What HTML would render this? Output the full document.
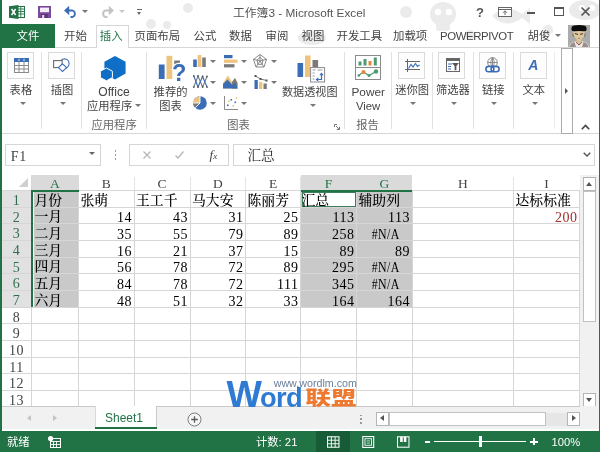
<!DOCTYPE html>
<html lang="zh-CN"><head><meta charset="utf-8"><title>Excel</title>
<style>
*{margin:0;padding:0;box-sizing:border-box}
html,body{width:600px;height:452px;overflow:hidden;background:#fff}
body{position:relative;font-family:"Liberation Sans","Noto Sans CJK SC",sans-serif;font-size:12px;color:#444}
.a{position:absolute;white-space:nowrap}
.t{position:absolute;white-space:nowrap;line-height:1}
svg{position:absolute;overflow:visible}
.tab{position:absolute;top:29px;font-size:11.4px;color:#444;line-height:14px;white-space:nowrap}
.gl{position:absolute;top:118px;font-size:11.3px;color:#666;line-height:14px;white-space:nowrap}
.bl{position:absolute;font-size:11.3px;color:#444;line-height:14px;white-space:nowrap}
.sep{position:absolute;top:52px;width:1px;height:77px;background:#e2e2e2}
.ib{position:absolute;top:52px;width:27px;height:27px;border:1px solid #dadada;background:#fdfdfd}
.dd{position:absolute;width:0;height:0;border-left:3px solid transparent;border-right:3px solid transparent;border-top:3px solid #777}
.ch{position:absolute;top:177px;height:14px;font-family:"Liberation Serif","Noto Serif CJK SC",serif;font-size:13.5px;line-height:14px;color:#444;text-align:center}
.rh{position:absolute;left:2px;width:29px;font-family:"Liberation Serif","Noto Serif CJK SC",serif;font-size:14px;line-height:17px;color:#444;text-align:center;letter-spacing:0.4px}
.vl{position:absolute;top:190px;width:1px;height:216px;background:#d6d6d6}
.hl{position:absolute;left:2px;width:578px;height:1px;background:#d6d6d6}
.c{position:absolute;height:17px;line-height:17px;font-family:"Liberation Serif","Noto Serif CJK SC",serif;font-size:13.85px;color:#000;white-space:nowrap;font-weight:500}
.n{text-align:right;font-size:14px;letter-spacing:0.5px;margin-top:2.7px}
.sel{position:absolute;background:#c9c9c9}
.sb{position:absolute;border:1px solid #b5b5b5;background:#fff}
</style></head>
<body>
<div style="position:absolute;left:0;top:0;width:600px;height:452px;will-change:transform">
<svg style="left:0;top:0" width="600" height="48" viewBox="0 0 600 48">
<g fill="#ebebeb">
<ellipse cx="443" cy="14" rx="13" ry="12"/><rect x="436" y="22" width="14" height="9" rx="3"/>
<path d="M492 16 q14 -14 30 -2 l8 -6 v16 l-8 -6 q-16 12 -30 -2z"/>
<ellipse cx="585" cy="10" rx="16" ry="10"/>
<circle cx="151" cy="24" r="5"/><circle cx="167" cy="25" r="4"/><circle cx="188" cy="8" r="5"/>
<ellipse cx="312" cy="38" rx="14" ry="7"/><circle cx="406" cy="12" r="6"/><circle cx="470" cy="35" r="5"/>
<circle cx="548" cy="30" r="5"/>
</g>
<g fill="#fff"><circle cx="438" cy="12" r="3.2"/><circle cx="449" cy="12" r="3.2"/><circle cx="505" cy="12" r="2"/><circle cx="582" cy="8" r="3"/><circle cx="592" cy="8" r="3"/></g>
</svg>
<div class="a" style="left:0;top:0;width:2px;height:452px;background:#217346"></div>
<div class="a" style="left:599px;top:0;width:1px;height:452px;background:#217346"></div>
<svg style="left:9px;top:5px" width="16" height="14" viewBox="0 0 16 14">
<rect x="7" y="1.5" width="8.5" height="11" fill="#fff" stroke="#217346" stroke-width="1"/>
<path d="M9 4h6M9 6.5h6M9 9h6M11.8 2v10" stroke="#217346" stroke-width="0.9" fill="none"/>
<path d="M0 1.2 L9.5 0 V14 L0 12.8z" fill="#217346"/>
<path d="M2.6 4 L6.6 10 M6.6 4 L2.6 10" stroke="#fff" stroke-width="1.5" fill="none"/>
</svg>
<svg style="left:38px;top:6px" width="13" height="12" viewBox="0 0 13 12">
<path d="M0 0h13v12H0z" fill="#7c4a9c"/><rect x="2" y="1.6" width="9" height="4.6" fill="#f3eef7"/><rect x="3.2" y="8" width="6.6" height="4" fill="#5d3579"/><rect x="4.2" y="9" width="2" height="3" fill="#e9e0f0"/>
</svg>
<svg style="left:64px;top:5px" width="14" height="12" viewBox="0 0 14 12">
<path d="M2.5 5.5 H8.5 A3.4 3.4 0 0 1 8.5 12 H6.5" fill="none" stroke="#3a6db5" stroke-width="1.8"/>
<path d="M0 5.5 L5.2 0.8 V10.2z" fill="#3a6db5"/></svg>
<div class="dd" style="left:82px;top:10px;border-top-color:#777"></div>
<svg style="left:100px;top:5px" width="14" height="12" viewBox="0 0 14 12">
<path d="M11.5 5.5 H5.5 A3.4 3.4 0 0 0 5.5 12 H7.5" fill="none" stroke="#c4c4c4" stroke-width="2"/>
<path d="M14 5.5 L8.8 0.8 V10.2z" fill="#c4c4c4"/></svg>
<div class="dd" style="left:119px;top:10px;border-top-color:#c8c8c8"></div>
<div class="a" style="left:137px;top:9px;width:5px;height:1px;background:#666"></div>
<div class="dd" style="left:137px;top:11.5px;border-left-width:2.5px;border-right-width:2.5px;border-top-color:#666"></div>
<div class="t" style="left:233px;top:5px;font-size:11.8px;color:#555;line-height:15px;top:5.5px">工作簿3 - Microsoft Excel</div>
<div class="t" style="left:476px;top:5px;font-size:13px;font-weight:bold;color:#555;line-height:15px">?</div>
<svg style="left:498px;top:7px" width="14" height="10" viewBox="0 0 14 10">
<rect x="0.5" y="0.5" width="13" height="9" fill="#fff" stroke="#666"/><path d="M0.5 2.5h13" stroke="#666"/><path d="M7 8V4M5 5.8L7 3.8L9 5.8" stroke="#666" fill="none"/></svg>
<div class="a" style="left:527px;top:12px;width:8px;height:2px;background:#555"></div>
<div class="a" style="left:554px;top:7px;width:10px;height:9px;border:1px solid #555;border-top-width:2.5px"></div>
<svg style="left:581px;top:7px" width="9" height="9" viewBox="0 0 9 9"><path d="M0.5 0.5L8.5 8.5M8.5 0.5L0.5 8.5" stroke="#555" stroke-width="1.7"/></svg>
<div class="a" style="left:2px;top:47px;width:597px;height:1px;background:#d6d6d6"></div>
<div class="a" style="left:2px;top:24px;width:53px;height:24px;background:#217346"></div>
<div class="tab" style="left:16.5px;color:#fff">文件</div>
<div class="a" style="left:95.5px;top:25px;width:33.5px;height:23px;background:#fff;border:1px solid #d6d6d6;border-bottom:none"></div>
<div class="tab" style="left:64px;color:#444">开始</div>
<div class="tab" style="left:99.8px;color:#217346">插入</div>
<div class="tab" style="left:134.5px;color:#444">页面布局</div>
<div class="tab" style="left:193.5px;color:#444">公式</div>
<div class="tab" style="left:229px;color:#444">数据</div>
<div class="tab" style="left:265.5px;color:#444">审阅</div>
<div class="tab" style="left:301.5px;color:#444">视图</div>
<div class="tab" style="left:336.5px;color:#444">开发工具</div>
<div class="tab" style="left:393px;color:#444">加载项</div>
<div class="tab" style="left:440px;color:#444;letter-spacing:-0.4px">POWERPIVOT</div>
<div class="tab" style="left:527.5px;color:#444">胡俊</div>
<div class="dd" style="left:555px;top:34px"></div>
<svg style="left:568px;top:25px" width="22" height="22" viewBox="0 0 22 22">
<rect width="22" height="22" fill="#ababab"/>
<path d="M1 22 Q2 17.5 7 16.5 L15 16.5 Q20 17.5 21 22z" fill="#f3e9ea"/>
<path d="M1.5 22 Q2.5 18 6.5 17 L8 22z M20.5 22 Q19.5 18 15.5 17 L14 22z" fill="#9a8f8a"/>
<path d="M8.5 13.5h5v4.2l-2.5 2l-2.5-2z" fill="#d9bf94"/>
<path d="M8 17.2 L11 20 L14 17.2" stroke="#7a4a3a" stroke-width="0.9" fill="none"/>
<path d="M5.2 6 H16.8 L16 11.5 L11 16.3 L6 11.5z" fill="#dec79c"/>
<path d="M4.6 8.5 l1 3.5 M17.4 8.5 l-1 3.5" stroke="#8a8070" stroke-width="1.2"/>
<path d="M3.4 4.8 Q3.2 1.2 6 0.6 Q11 -0.6 16 0.6 Q18.8 1.2 18.6 4.8 Q18 6.6 15.5 6.3 Q11 5.6 6.5 6.3 Q4 6.6 3.4 4.8z" fill="#0c0c0c"/>
<path d="M7 8.6 L10 9.4 M15 8.6 L12 9.4" stroke="#2a2018" stroke-width="0.9"/>
<path d="M10 13.4h2" stroke="#8a5a40" stroke-width="0.7"/>
</svg>
<div class="a" style="left:2px;top:133px;width:597px;height:1px;background:#d6d6d6"></div>
<div class="sep" style="left:40.5px"></div>
<div class="sep" style="left:81px"></div>
<div class="sep" style="left:146px"></div>
<div class="sep" style="left:344px"></div>
<div class="sep" style="left:391px"></div>
<div class="sep" style="left:432px"></div>
<div class="sep" style="left:472.5px"></div>
<div class="sep" style="left:512.5px"></div>
<div class="sep" style="left:553.5px;background:#ececec"></div>
<div class="ib" style="left:7px"></div>
<svg style="left:14px;top:57.5px" width="15" height="15" viewBox="0 0 15 15">
<rect x="0.5" y="0.5" width="14" height="14" fill="#fff" stroke="#8a8a8a"/>
<rect x="0" y="0" width="15" height="4" fill="#3a6db5"/>
<path d="M0.5 7.5h14M0.5 11h14M5 4v10.5M10 4v10.5" stroke="#8a8a8a" stroke-width="1" fill="none"/>
<path d="M5 0.8v2.4M10 0.8v2.4" stroke="#fff" stroke-width="0.8"/></svg>
<div class="bl" style="left:9.6px;top:83px">表格</div>
<div class="dd" style="left:19.5px;top:102px"></div>
<div class="ib" style="left:47.5px"></div>
<svg style="left:53px;top:58px" width="17" height="14" viewBox="0 0 17 14">
<circle cx="11.5" cy="5.5" r="4.6" fill="#fff" stroke="#3a6db5" stroke-width="1.1"/>
<rect x="0.6" y="2.6" width="8.6" height="7" fill="#fff" stroke="#6a6a6a" stroke-width="1.1"/>
<path d="M9.5 5.8 L13.6 9.6 L9.5 13.4 L5.4 9.6z" fill="#fff" stroke="#3a6db5" stroke-width="1.1"/></svg>
<div class="bl" style="left:50.8px;top:83px">插图</div>
<div class="dd" style="left:59.6px;top:102px"></div>
<svg style="left:100px;top:55.5px" width="26" height="25" viewBox="0 0 26 25">
<path d="M15 0 L25.6 5.8 V17.6 L15 23.4 L4.4 17.6 V5.8z" fill="#0f6fc6"/>
<path d="M6.4 12 L12.4 15.2 V21.6 L6.4 24.8 L0.4 21.6 V15.2z" fill="#0f6fc6" stroke="#fff" stroke-width="1"/></svg>
<div class="bl" style="left:98.3px;top:85px;font-size:12.1px">Office</div>
<div class="bl" style="left:87px;top:98.5px">应用程序</div>
<div class="dd" style="left:134.5px;top:104px"></div>
<div class="gl" style="left:91.5px">应用程序</div>
<svg style="left:158px;top:55px" width="29" height="27" viewBox="0 0 29 27">
<rect x="0.8" y="9.5" width="5.8" height="14.5" fill="#3a6db5"/>
<rect x="8.5" y="0.8" width="5.8" height="23.2" fill="#edc37e"/>
<rect x="16.2" y="5.5" width="5.8" height="6" fill="#7a7a7a"/>
<text x="14" y="26.3" font-family="Liberation Sans,sans-serif" font-weight="bold" font-size="23.5" fill="#fff" stroke="#fff" stroke-width="2.5">?</text>
<text x="14" y="26.3" font-family="Liberation Sans,sans-serif" font-weight="bold" font-size="23.5" fill="#3a6db5">?</text></svg>
<div class="bl" style="left:153.6px;top:84.5px">推荐的</div>
<div class="bl" style="left:159.3px;top:98.5px">图表</div>
<svg style="left:193px;top:54.5px" width="14" height="12" viewBox="0 0 14 12">
<rect x="0.2" y="4.5" width="3.6" height="7.5" fill="#3a6db5"/><rect x="4.7" y="0" width="3.6" height="12" fill="#edc37e"/><rect x="9.2" y="2.5" width="3.6" height="9.5" fill="#7a7a7a"/></svg>
<svg style="left:192.5px;top:75px" width="15" height="13" viewBox="0 0 15 13">
<path d="M0.8 12 L5 1 L9.6 12 L14 1.5" stroke="#7d7d7d" fill="none" stroke-width="1.1"/>
<path d="M0.8 1 L5 12 L9.6 1.5 L14 12" stroke="#3a6db5" fill="none" stroke-width="1.1"/>
<g fill="#555"><rect x="0" y="0.2" width="1.6" height="1.6"/><rect x="0" y="11.2" width="1.6" height="1.6"/><rect x="4.2" y="0.2" width="1.6" height="1.6"/><rect x="4.2" y="11.2" width="1.6" height="1.6"/><rect x="8.8" y="0.7" width="1.6" height="1.6"/><rect x="8.8" y="11.2" width="1.6" height="1.6"/><rect x="13.2" y="0.7" width="1.6" height="1.6"/><rect x="13.2" y="11.2" width="1.6" height="1.6"/></g></svg>
<svg style="left:192.5px;top:95.5px" width="14" height="14" viewBox="0 0 14 14">
<circle cx="7" cy="7" r="6.8" fill="#3a6db5"/>
<path d="M7 7 V0.2 A6.8 6.8 0 0 0 0.2 7z" fill="#edc37e"/>
<path d="M7 7 H0.2 A6.8 6.8 0 0 0 2.2 11.8z" fill="#7a7a7a"/>
<path d="M7 0V7H0M7 7L2.2 11.8" stroke="#fff" stroke-width="0.9" fill="none"/></svg>
<svg style="left:223.5px;top:54.5px" width="14" height="13" viewBox="0 0 14 13">
<rect x="0" y="0" width="8.5" height="3.2" fill="#3a6db5"/><rect x="0" y="4.6" width="13.5" height="3.2" fill="#edc37e"/><rect x="0" y="9.2" width="10.5" height="3.2" fill="#7a7a7a"/></svg>
<svg style="left:223px;top:75px" width="15" height="14" viewBox="0 0 15 14">
<path d="M0 13.5 V8 L5 0.5 L9 7 L12 3 L14.5 8 V13.5z" fill="#edc37e"/>
<path d="M9 7 L12 3 L14.5 8 V13.5 H9z" fill="#7a7a7a"/>
<path d="M0 13.5 V9 L4.5 4.5 L9.5 10 L12.5 7.5 L14.5 13.5z" fill="#3a6db5"/></svg>
<svg style="left:224px;top:96px" width="14" height="14" viewBox="0 0 14 14">
<path d="M0.5 0V13.5H14" stroke="#8a8a8a" fill="none"/>
<g fill="#3a6db5"><rect x="3" y="8.5" width="1.6" height="1.6"/><rect x="6.5" y="3" width="1.6" height="1.6"/><rect x="10.5" y="5.5" width="1.6" height="1.6"/></g>
<g fill="#edc37e"><rect x="4" y="4.5" width="1.6" height="1.6"/><rect x="8.5" y="9" width="1.6" height="1.6"/><rect x="11.5" y="1.5" width="1.6" height="1.6"/></g></svg>
<svg style="left:253px;top:53.5px" width="14" height="14" viewBox="0 0 14 14">
<path d="M7 0.5 L13.5 5.3 L11 13 H3 L0.5 5.3z M7 7 V0.5 M7 7 L13.5 5.3 M7 7 L11 13 M7 7 L3 13 M7 7 L0.5 5.3 M7 3.5 L10 6 L9 10.3 H5 L4 6z" stroke="#7d7d7d" fill="none" stroke-width="0.9"/></svg>
<svg style="left:253.5px;top:75px" width="14" height="14" viewBox="0 0 14 14">
<rect x="0.5" y="5" width="3.3" height="9" fill="#3a6db5"/><rect x="5" y="7" width="3.3" height="7" fill="#edc37e"/><rect x="9.5" y="8.5" width="3.3" height="5.5" fill="#7a7a7a"/>
<path d="M1.5 1 L6.5 4 L12.5 5.5" stroke="#666" fill="none" stroke-width="0.9"/>
<g fill="#555"><rect x="0.5" y="0" width="2" height="2"/><rect x="5.5" y="3" width="2" height="2"/><rect x="11.5" y="4.5" width="2" height="2"/></g></svg>
<div class="dd" style="left:209.5px;top:60px"></div>
<div class="dd" style="left:209.5px;top:81px"></div>
<div class="dd" style="left:209.5px;top:102px"></div>
<div class="dd" style="left:240.5px;top:60px"></div>
<div class="dd" style="left:240.5px;top:81px"></div>
<div class="dd" style="left:240.5px;top:102px"></div>
<div class="dd" style="left:271px;top:60px"></div>
<div class="dd" style="left:271px;top:81px"></div>
<div class="gl" style="left:227.3px">图表</div>
<svg style="left:297px;top:55px" width="28" height="28" viewBox="0 0 28 28">
<rect x="0.5" y="8" width="5.6" height="14" fill="#3a6db5"/>
<rect x="8" y="0.5" width="5.6" height="21.5" fill="#edc37e"/>
<rect x="15.5" y="5" width="5.6" height="8" fill="#7a7a7a"/>
<rect x="13.6" y="12.6" width="14" height="14.4" fill="#fff" stroke="#8a8a8a"/>
<path d="M15.5 15h3M15.5 18h2M15.5 21h2M15.5 24h2M20.5 15h5" stroke="#9a9a9a" stroke-width="1.2"/>
<path d="M19.5 24.5 H24.5 V18.5" stroke="#3a6db5" fill="none" stroke-width="1.2"/>
<path d="M22.3 20.3 L24.5 17.6 L26.7 20.3z M21.3 22.3 L18.6 24.5 L21.3 26.7z" fill="#3a6db5"/></svg>
<div class="bl" style="left:282px;top:84.5px;font-size:11.1px">数据透视图</div>
<div class="dd" style="left:309.5px;top:104px"></div>
<svg style="left:334px;top:124px" width="6" height="6" viewBox="0 0 6 6"><path d="M0.5 3V0.5H3" stroke="#777" fill="none"/><path d="M2 2L5.5 5.5M5.5 2.8V5.5H2.8" stroke="#777" fill="none"/></svg>
<svg style="left:355px;top:55px" width="26" height="25" viewBox="0 0 26 25">
<rect x="0.5" y="0.5" width="25" height="24" fill="#fff" stroke="#8a8a8a"/>
<path d="M0.5 12.5h25" stroke="#8a8a8a"/>
<rect x="3.5" y="6.5" width="3" height="4" fill="#4d9a73"/><rect x="8.5" y="4" width="3" height="6.5" fill="#4d9a73"/><rect x="13.5" y="6" width="3" height="4.5" fill="#e8873a"/><rect x="18.8" y="2.5" width="3" height="8" fill="#4d9a73"/>
<path d="M3.5 20.5 L8.5 17 L14 20.5 L21 16.5" stroke="#4d9a73" fill="none" stroke-width="1.2"/>
<circle cx="3.8" cy="20.5" r="1.3" fill="#4d9a73"/><circle cx="8.5" cy="17" r="2" fill="#e8873a"/><circle cx="14" cy="20.5" r="1.5" fill="#4d9a73"/><circle cx="21" cy="16.5" r="2.2" fill="#4d9a73"/></svg>
<div class="bl" style="left:351.5px;top:85px;font-size:11.8px">Power</div>
<div class="bl" style="left:356px;top:98.5px;font-size:11.3px">View</div>
<div class="gl" style="left:356.3px">报告</div>
<div class="ib" style="left:397.5px"></div>
<svg style="left:405px;top:59px" width="15" height="13" viewBox="0 0 15 13">
<path d="M2.5 0V13M0 2.5H15M0 10.5H15" stroke="#666" fill="none"/>
<path d="M3.5 9.5 L6 5.5 L8 8 L10.5 4.5 L12.5 7.5 L14.5 6" stroke="#3a6db5" fill="none" stroke-width="1.1"/></svg>
<div class="bl" style="left:395.2px;top:83px">迷你图</div>
<div class="dd" style="left:410.2px;top:102px"></div>
<div class="ib" style="left:438.3px"></div>
<svg style="left:446px;top:58px" width="14" height="14" viewBox="0 0 14 14">
<rect x="0.5" y="0.5" width="13" height="13" fill="#fff" stroke="#666"/><rect x="0" y="0" width="14" height="3" fill="#666"/>
<path d="M2 6h4M2 8.5h3M2 11h3" stroke="#3a6db5" stroke-width="1.1"/>
<path d="M6 5h7l-2.6 3v4.2h-1.8V8z" fill="#555"/></svg>
<div class="bl" style="left:436px;top:83px">筛选器</div>
<div class="dd" style="left:450.8px;top:102px"></div>
<div class="ib" style="left:478.5px"></div>
<svg style="left:485px;top:56.5px" width="15" height="17" viewBox="0 0 15 17">
<circle cx="7.5" cy="5.5" r="4.8" fill="#fff" stroke="#777" stroke-width="0.9"/>
<path d="M2.7 5.5h9.6M7.5 0.7v9.6M7.5 0.7Q4 5.5 7.5 10.3M7.5 0.7Q11 5.5 7.5 10.3" stroke="#777" fill="none" stroke-width="0.8"/>
<rect x="0.9" y="9.4" width="8" height="5.4" rx="2.7" fill="#fff" stroke="#3a6db5" stroke-width="1.6"/>
<rect x="6.1" y="9.4" width="8" height="5.4" rx="2.7" fill="none" stroke="#3a6db5" stroke-width="1.6"/></svg>
<div class="bl" style="left:482px;top:83px">链接</div>
<div class="dd" style="left:491px;top:102px"></div>
<div class="ib" style="left:519.5px"></div>
<div class="t" style="left:528.3px;top:58.3px;font-size:14px;font-weight:bold;font-style:italic;color:#3a6db5;line-height:14px;font-family:&quot;Liberation Sans&quot;,sans-serif">A</div>
<div class="bl" style="left:522.5px;top:83px">文本</div>
<div class="dd" style="left:532px;top:102px"></div>
<div class="a" style="left:560.5px;top:48px;width:12px;height:86px;border:1px solid #ababab;background:#fff"></div>
<div class="a" style="left:565px;top:88px;width:0;height:0;border-top:3px solid transparent;border-bottom:3px solid transparent;border-left:3.5px solid #555"></div>
<svg style="left:581px;top:123.5px" width="9" height="6" viewBox="0 0 9 6"><path d="M0.8 5.2L4.5 1.5L8.2 5.2" stroke="#444" stroke-width="1.6" fill="none"/></svg>
<div class="a" style="left:5px;top:144px;width:96px;height:22px;border:1px solid #d6d6d6;background:#fff"></div>
<div class="t" style="left:10.8px;top:148.5px;font-family:'Liberation Serif','Noto Serif CJK SC',serif;font-size:14px;letter-spacing:0.6px;color:#444;line-height:15px">F1</div>
<div class="dd" style="left:88.7px;top:152px;border-top-color:#666"></div>
<div class="a" style="left:114.5px;top:150px;width:1.5px;height:1.5px;background:#9a9a9a"></div>
<div class="a" style="left:114.5px;top:154px;width:1.5px;height:1.5px;background:#9a9a9a"></div>
<div class="a" style="left:114.5px;top:158px;width:1.5px;height:1.5px;background:#9a9a9a"></div>
<div class="a" style="left:128.5px;top:144px;width:100px;height:22px;border:1px solid #d6d6d6;background:#fff"></div>
<svg style="left:143px;top:151px" width="8" height="8" viewBox="0 0 8 8"><path d="M0.5 0.5L7.5 7.5M7.5 0.5L0.5 7.5" stroke="#b4b4b4" stroke-width="1.1"/></svg>
<svg style="left:175px;top:151px" width="9" height="8" viewBox="0 0 9 8"><path d="M0.5 4.5L3 7L8.5 0.5" stroke="#b4b4b4" stroke-width="1.2" fill="none"/></svg>
<div class="t" style="left:209.5px;top:148px;font-family:&quot;Liberation Serif&quot;,serif;font-style:italic;font-size:13px;color:#444;line-height:14px">f<span style="font-size:9px">x</span></div>
<div class="a" style="left:232.5px;top:144px;width:362px;height:22px;border:1px solid #d6d6d6;background:#fff"></div>
<div class="t" style="left:247.5px;top:146.5px;font-family:'Liberation Serif','Noto Serif CJK SC',serif;font-size:13.6px;color:#222;line-height:17px">汇总</div>
<svg style="left:582.5px;top:152px" width="8" height="5" viewBox="0 0 8 5"><path d="M0.7 0.7L4 4L7.3 0.7" stroke="#555" stroke-width="1.4" fill="none"/></svg>
<div class="a" style="left:19px;top:178px;width:0;height:0;border-left:9px solid transparent;border-bottom:9px solid #cfcfcf"></div>
<div class="a" style="left:31px;top:175px;width:47.5px;height:15px;background:#dadada"></div>
<div class="a" style="left:300.5px;top:175px;width:56.0px;height:15px;background:#dadada"></div>
<div class="a" style="left:356.5px;top:175px;width:55.5px;height:15px;background:#dadada"></div>
<div class="a" style="left:2px;top:190.5px;width:29px;height:116.75999999999999px;background:#e1e1e1"></div>
<div class="sel" style="left:33.5px;top:192.0px;width:44px;height:115.25999999999999px"></div>
<div class="sel" style="left:300.5px;top:191.5px;width:111.5px;height:115.75999999999999px"></div>
<div class="a" style="left:2px;top:190px;width:578px;height:1px;background:#d6d6d6"></div>
<div class="vl" style="left:78.0px"></div>
<div class="vl" style="left:133.5px"></div>
<div class="a" style="left:133.5px;top:177px;width:1px;height:13px;background:#e4e4e4"></div>
<div class="vl" style="left:189.5px"></div>
<div class="a" style="left:189.5px;top:177px;width:1px;height:13px;background:#e4e4e4"></div>
<div class="vl" style="left:245.0px"></div>
<div class="a" style="left:245.0px;top:177px;width:1px;height:13px;background:#e4e4e4"></div>
<div class="vl" style="left:300.0px"></div>
<div class="a" style="left:300.0px;top:177px;width:1px;height:13px;background:#e4e4e4"></div>
<div class="vl" style="left:356.0px"></div>
<div class="vl" style="left:411.5px"></div>
<div class="vl" style="left:513.0px"></div>
<div class="a" style="left:513.0px;top:177px;width:1px;height:13px;background:#e4e4e4"></div>
<div class="vl" style="left:579.0px"></div>
<div class="vl" style="left:30.5px;top:176px;height:230px"></div>
<div class="hl" style="top:206.68px"></div>
<div class="hl" style="top:223.36px"></div>
<div class="hl" style="top:240.04px"></div>
<div class="hl" style="top:256.72px"></div>
<div class="hl" style="top:273.40px"></div>
<div class="hl" style="top:290.08px"></div>
<div class="hl" style="top:306.76px"></div>
<div class="hl" style="top:323.44px"></div>
<div class="hl" style="top:340.12px"></div>
<div class="hl" style="top:356.80px"></div>
<div class="hl" style="top:373.48px"></div>
<div class="hl" style="top:390.16px"></div>
<div class="a" style="left:301.5px;top:192px;width:54px;height:14.5px;background:#fff;border:1px solid #3d7d5b"></div>
<div class="a" style="left:31px;top:189.5px;width:47.5px;height:2px;background:#217346"></div>
<div class="a" style="left:300.5px;top:189.5px;width:111.5px;height:2px;background:#217346"></div>
<div class="a" style="left:30.5px;top:189.5px;width:2px;height:117.75999999999999px;background:#217346"></div>
<div class="ch" style="left:31px;width:47.5px;color:#217346">A</div>
<div class="ch" style="left:78.5px;width:55.5px;color:#444">B</div>
<div class="ch" style="left:134px;width:56px;color:#444">C</div>
<div class="ch" style="left:190px;width:55.5px;color:#444">D</div>
<div class="ch" style="left:245.5px;width:55.0px;color:#444">E</div>
<div class="ch" style="left:300.5px;width:56.0px;color:#217346">F</div>
<div class="ch" style="left:356.5px;width:55.5px;color:#217346">G</div>
<div class="ch" style="left:412px;width:101.5px;color:#444">H</div>
<div class="ch" style="left:513.5px;width:66.0px;color:#444">I</div>
<div class="rh" style="top:191.90px;color:#2f6f4f;height:17.00px;overflow:hidden">1</div>
<div class="rh" style="top:208.58px;color:#2f6f4f;height:17.00px;overflow:hidden">2</div>
<div class="rh" style="top:225.26px;color:#2f6f4f;height:17.00px;overflow:hidden">3</div>
<div class="rh" style="top:241.94px;color:#2f6f4f;height:17.00px;overflow:hidden">4</div>
<div class="rh" style="top:258.62px;color:#2f6f4f;height:17.00px;overflow:hidden">5</div>
<div class="rh" style="top:275.30px;color:#2f6f4f;height:17.00px;overflow:hidden">6</div>
<div class="rh" style="top:291.98px;color:#2f6f4f;height:17.00px;overflow:hidden">7</div>
<div class="rh" style="top:308.66px;color:#444;height:17.00px;overflow:hidden">8</div>
<div class="rh" style="top:325.34px;color:#444;height:17.00px;overflow:hidden">9</div>
<div class="rh" style="top:342.02px;color:#444;height:17.00px;overflow:hidden">10</div>
<div class="rh" style="top:358.70px;color:#444;height:17.00px;overflow:hidden">11</div>
<div class="rh" style="top:375.38px;color:#444;height:17.00px;overflow:hidden">12</div>
<div class="rh" style="top:392.06px;color:#444;height:15.34px;overflow:hidden">13</div>
<div class="c" style="left:34.5px;top:191.70px">月份</div>
<div class="c" style="left:80.5px;top:191.70px">张萌</div>
<div class="c" style="left:136px;top:191.70px">王工千</div>
<div class="c" style="left:192px;top:191.70px">马大安</div>
<div class="c" style="left:247.5px;top:191.70px">陈丽芳</div>
<div class="c" style="left:301.5px;top:191.70px">汇总</div>
<div class="c" style="left:358.5px;top:191.70px">辅助列</div>
<div class="c" style="left:515.5px;top:191.70px">达标标准</div>
<div class="c" style="left:34.5px;top:208.38px">一月</div>
<div class="c n" style="left:78.5px;top:206.68px;width:53.5px;color:#000">14</div>
<div class="c n" style="left:134px;top:206.68px;width:54px;color:#000">43</div>
<div class="c n" style="left:190px;top:206.68px;width:53.5px;color:#000">31</div>
<div class="c n" style="left:245.5px;top:206.68px;width:53.0px;color:#000">25</div>
<div class="c n" style="left:300.5px;top:206.68px;width:54.0px;color:#000">113</div>
<div class="c n" style="left:356.5px;top:206.68px;width:53.5px;color:#000">113</div>
<div class="c n" style="left:513.5px;top:206.68px;width:64.0px;color:#a03030">200</div>
<div class="c" style="left:34.5px;top:225.06px">二月</div>
<div class="c n" style="left:78.5px;top:223.36px;width:53.5px;color:#000">35</div>
<div class="c n" style="left:134px;top:223.36px;width:54px;color:#000">55</div>
<div class="c n" style="left:190px;top:223.36px;width:53.5px;color:#000">79</div>
<div class="c n" style="left:245.5px;top:223.36px;width:53.0px;color:#000">89</div>
<div class="c n" style="left:300.5px;top:223.36px;width:54.0px;color:#000">258</div>
<div class="c n" style="left:356.5px;top:223.36px;width:57.5px;text-align:center;transform:scaleX(0.85)">#N/A</div>
<div class="c" style="left:34.5px;top:241.74px">三月</div>
<div class="c n" style="left:78.5px;top:240.04px;width:53.5px;color:#000">16</div>
<div class="c n" style="left:134px;top:240.04px;width:54px;color:#000">21</div>
<div class="c n" style="left:190px;top:240.04px;width:53.5px;color:#000">37</div>
<div class="c n" style="left:245.5px;top:240.04px;width:53.0px;color:#000">15</div>
<div class="c n" style="left:300.5px;top:240.04px;width:54.0px;color:#000">89</div>
<div class="c n" style="left:356.5px;top:240.04px;width:53.5px;color:#000">89</div>
<div class="c" style="left:34.5px;top:258.42px">四月</div>
<div class="c n" style="left:78.5px;top:256.72px;width:53.5px;color:#000">56</div>
<div class="c n" style="left:134px;top:256.72px;width:54px;color:#000">78</div>
<div class="c n" style="left:190px;top:256.72px;width:53.5px;color:#000">72</div>
<div class="c n" style="left:245.5px;top:256.72px;width:53.0px;color:#000">89</div>
<div class="c n" style="left:300.5px;top:256.72px;width:54.0px;color:#000">295</div>
<div class="c n" style="left:356.5px;top:256.72px;width:57.5px;text-align:center;transform:scaleX(0.85)">#N/A</div>
<div class="c" style="left:34.5px;top:275.10px">五月</div>
<div class="c n" style="left:78.5px;top:273.40px;width:53.5px;color:#000">84</div>
<div class="c n" style="left:134px;top:273.40px;width:54px;color:#000">78</div>
<div class="c n" style="left:190px;top:273.40px;width:53.5px;color:#000">72</div>
<div class="c n" style="left:245.5px;top:273.40px;width:53.0px;color:#000">111</div>
<div class="c n" style="left:300.5px;top:273.40px;width:54.0px;color:#000">345</div>
<div class="c n" style="left:356.5px;top:273.40px;width:57.5px;text-align:center;transform:scaleX(0.85)">#N/A</div>
<div class="c" style="left:34.5px;top:291.78px">六月</div>
<div class="c n" style="left:78.5px;top:290.08px;width:53.5px;color:#000">48</div>
<div class="c n" style="left:134px;top:290.08px;width:54px;color:#000">51</div>
<div class="c n" style="left:190px;top:290.08px;width:53.5px;color:#000">32</div>
<div class="c n" style="left:245.5px;top:290.08px;width:53.0px;color:#000">33</div>
<div class="c n" style="left:300.5px;top:290.08px;width:54.0px;color:#000">164</div>
<div class="c n" style="left:356.5px;top:290.08px;width:53.5px;color:#000">164</div>
<div class="a" style="left:580px;top:175px;width:19px;height:231px;background:#f1f1f1"></div>
<div class="sb" style="left:582.5px;top:176.5px;width:13.5px;height:14px"></div>
<div class="a" style="left:586px;top:181.5px;width:0;height:0;border-left:3.5px solid transparent;border-right:3.5px solid transparent;border-bottom:4px solid #555"></div>
<div class="sb" style="left:582.5px;top:190.5px;width:13.5px;height:131px;border-color:#c2c2c2"></div>
<div class="sb" style="left:582.5px;top:392.5px;width:13.5px;height:14px"></div>
<div class="a" style="left:586px;top:398px;width:0;height:0;border-left:3.5px solid transparent;border-right:3.5px solid transparent;border-top:4px solid #555"></div>
<div class="t" style="z-index:5;left:226.5px;top:376.3px;font-size:37.5px;font-weight:bold;color:#2f7bd3;line-height:37px;font-family:&quot;Liberation Sans&quot;,sans-serif;letter-spacing:-1px">W</div>
<div class="t" style="z-index:5;left:260px;top:384.2px;font-size:27.3px;font-weight:bold;color:#2f7bd3;line-height:27px;font-family:&quot;Liberation Sans&quot;,sans-serif;letter-spacing:-0.6px">ord</div>
<div class="t" style="z-index:5;left:273.7px;top:377.8px;font-size:10.7px;color:#6a7f9a;line-height:11px">www.wordlm.com</div>
<div class="t" style="z-index:5;left:305.5px;top:387.2px;font-size:25.5px;font-weight:900;color:#ee7a30;line-height:25.5px;font-family:&quot;Noto Sans CJK SC&quot;,sans-serif;transform:scaleY(0.75);transform-origin:0 0">联盟</div>
<div class="a" style="left:2px;top:406px;width:597px;height:23px;background:#f1f1f1"></div>
<div class="a" style="left:2px;top:406px;width:578px;height:1px;background:#c9c9c9"></div>
<div class="a" style="left:2px;top:428.5px;width:597px;height:3px;background:#fff"></div>
<div class="a" style="left:95px;top:406px;width:62px;height:22px;background:#fff;border-right:1px solid #c9c9c9;border-left:1px solid #d9d9d9"></div>
<div class="a" style="left:95px;top:426.5px;width:62px;height:2px;background:#217346"></div>
<div class="t" style="left:105px;top:410.6px;font-size:12px;color:#217346;line-height:14px;font-family:&quot;Liberation Sans&quot;,sans-serif">Sheet1</div>
<div class="a" style="left:26.5px;top:415px;width:0;height:0;border-top:3.5px solid transparent;border-bottom:3.5px solid transparent;border-right:4px solid #c3c3c3"></div>
<div class="a" style="left:52.5px;top:415px;width:0;height:0;border-top:3.5px solid transparent;border-bottom:3.5px solid transparent;border-left:4px solid #c3c3c3"></div>
<svg style="left:187px;top:411.5px" width="15" height="15" viewBox="0 0 15 15"><circle cx="7.5" cy="7.5" r="6.5" fill="#f8f8f8" stroke="#7d7d7d" stroke-width="1"/><path d="M4.2 7.5h6.6M7.5 4.2v6.6" stroke="#5a5a5a" stroke-width="1.3"/></svg>
<div class="a" style="left:360px;top:414.5px;width:1.5px;height:1.5px;background:#9a9a9a"></div>
<div class="a" style="left:360px;top:418.2px;width:1.5px;height:1.5px;background:#9a9a9a"></div>
<div class="a" style="left:360px;top:422px;width:1.5px;height:1.5px;background:#9a9a9a"></div>
<div class="a" style="left:389px;top:412.5px;width:178px;height:13px;background:#e6e6e6"></div>
<div class="sb" style="left:376px;top:412px;width:13px;height:13.5px"></div>
<div class="a" style="left:380px;top:415.3px;width:0;height:0;border-top:3.5px solid transparent;border-bottom:3.5px solid transparent;border-right:4px solid #555"></div>
<div class="sb" style="left:388.5px;top:412px;width:157px;height:13.5px;border-color:#c2c2c2"></div>
<div class="sb" style="left:566.5px;top:412px;width:13px;height:13.5px"></div>
<div class="a" style="left:571.5px;top:415px;width:0;height:0;border-top:3.5px solid transparent;border-bottom:3.5px solid transparent;border-left:4px solid #555"></div>
<div class="a" style="left:0;top:431px;width:600px;height:21px;background:#217346"></div>
<div class="t" style="left:7px;top:435.5px;font-size:11.3px;color:#fff;line-height:13px">就绪</div>
<svg style="left:48px;top:435.5px" width="13" height="12" viewBox="0 0 13 12"><rect x="2.5" y="2.5" width="10" height="9" fill="none" stroke="#fff"/><path d="M2.5 5.5h10M5.5 5.5v6M8.5 5.5v6M2.5 8.5h10" stroke="#fff" stroke-width="0.9"/><circle cx="2.6" cy="2.6" r="2.6" fill="#fff"/></svg>
<div class="t" style="left:256px;top:435.5px;font-size:11.3px;color:#fff;line-height:13px">计数: 21</div>
<div class="a" style="left:316px;top:431px;width:34px;height:21px;background:#185c37"></div>
<svg style="left:327px;top:435.5px" width="12.5" height="12" viewBox="0 0 12 11"><rect x="0.5" y="0.5" width="11" height="10" fill="none" stroke="#fff"/><path d="M0.5 3.8h11M0.5 7.2h11M4.2 0.5v10M7.8 0.5v10" stroke="#fff" stroke-width="0.9"/></svg>
<svg style="left:361.5px;top:435.5px" width="12.5" height="12" viewBox="0 0 11 11"><rect x="0.5" y="0.5" width="10" height="10" fill="none" stroke="#fff"/><rect x="2.5" y="2.5" width="6" height="6" fill="none" stroke="#fff" stroke-width="0.8"/><path d="M4 4.5h3M4 6.5h3" stroke="#fff" stroke-width="0.7"/></svg>
<svg style="left:396.5px;top:435.5px" width="12.5" height="12" viewBox="0 0 12 11"><rect x="0.5" y="0.5" width="11" height="10" fill="none" stroke="#fff"/><rect x="3" y="0.5" width="2.5" height="5" fill="#fff"/><rect x="6.5" y="0.5" width="2.5" height="5" fill="#fff"/></svg>
<div class="a" style="left:425px;top:440.5px;width:5px;height:2px;background:#fff"></div>
<div class="a" style="left:433.5px;top:441px;width:92px;height:1px;background:#fff"></div>
<div class="a" style="left:478.7px;top:435.5px;width:3.5px;height:11px;background:#fff"></div>
<div class="a" style="left:530px;top:440.5px;width:7.5px;height:2px;background:#fff"></div>
<div class="a" style="left:532.8px;top:437.7px;width:2px;height:7.5px;background:#fff"></div>
<div class="t" style="left:551.5px;top:435.5px;font-size:11.2px;color:#fff;line-height:13px">100%</div>
</div>
</body></html>
